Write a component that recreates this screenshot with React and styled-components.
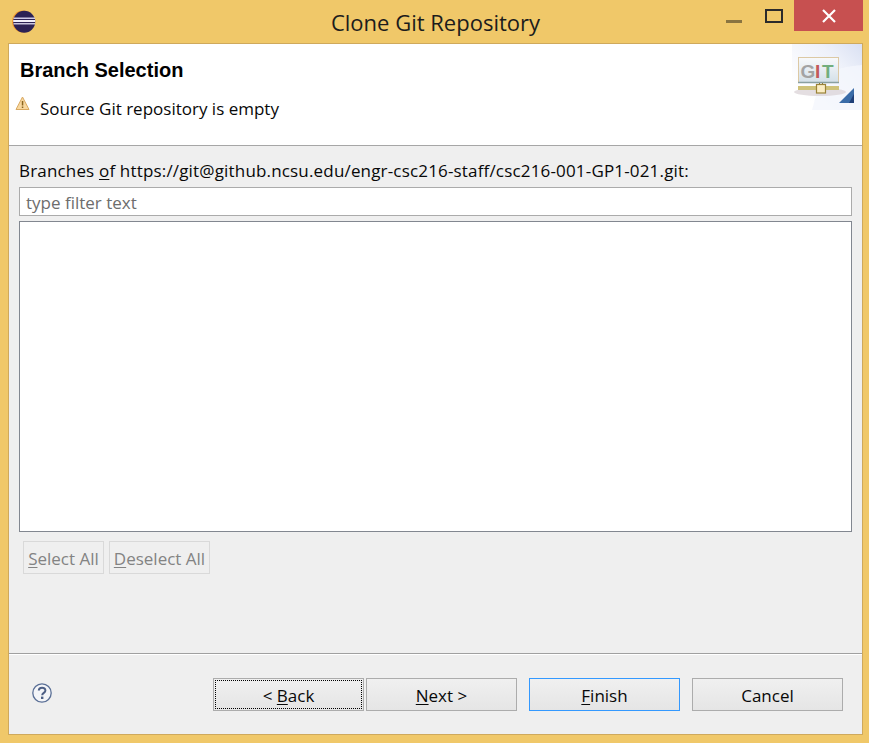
import React from 'react';
import styled, { createGlobalStyle, css } from 'styled-components';

const Global = createGlobalStyle`
    html, body {
        margin: 0;
        padding: 0;
        background: #f0c869;
    }
    * {
        box-sizing: border-box;
    }
`;

const Window = styled.div`
    width: 869px;
    height: 743px;
    background: #f0c869;
    display: flex;
    flex-direction: column;
    font-family: "Open Sans", "Noto Sans", sans-serif;
    font-size: 17px;
    color: #080808;
    overflow: hidden;
`;

const TitleBar = styled.div`
    height: 43px;
    flex: none;
    display: grid;
    grid-template-columns: 1fr auto 1fr;
    align-items: start;
`;

const AppIcon = styled.div`
    padding: 10px 0 0 12px;
    line-height: 0;
`;

const Title = styled.div`
    font-size: 22px;
    line-height: 44px;
    color: #1c1c1c;
    padding-left: 2px;
`;

const Controls = styled.div`
    display: flex;
    justify-content: flex-end;
    padding-right: 6px;
`;

const ControlButton = styled.div`
    height: 31px;
    display: flex;
    align-items: center;
    justify-content: center;
    line-height: 0;
    width: ${p => p.$width}px;
    background: ${p => p.$close ? '#c75050' : 'transparent'};
`;

const Body = styled.div`
    margin: 0 6px 8px 8px;
    flex: 1;
    border: 1px solid #cfa95c;
    background: #efefef;
    display: flex;
    flex-direction: column;
`;

const Header = styled.div`
    height: 102px;
    flex: none;
    background: #fff;
    border-bottom: 1px solid #a6a6a6;
    display: flex;
    justify-content: space-between;
    align-items: flex-start;
`;

const HeaderText = styled.div`
    padding: 13px 0 0 6px;
`;

const Heading = styled.div`
    font-family: "Liberation Sans", Arial, sans-serif;
    font-weight: 700;
    font-size: 20px;
    line-height: 26px;
    color: #000;
    padding-left: 5px;
`;

const Message = styled.div`
    display: flex;
    align-items: center;
    gap: 10px;
    margin-top: 13px;
    line-height: 26px;
`;

const WarningWrap = styled.span`
    line-height: 0;
    margin-top: -11px;
`;

const Main = styled.div`
    flex: 1;
    display: flex;
    flex-direction: column;
    padding: 14px 10px 0 10px;
`;

const Label = styled.div`
    height: 27px;
    line-height: 21px;
    white-space: nowrap;
    letter-spacing: 0.17px;
`;

const FilterInput = styled.div`
    height: 29px;
    border: 1px solid #ababab;
    background: #fff;
    padding-left: 6px;
    line-height: 29px;
    color: #6d6d6d;
`;

const BranchList = styled.div`
    height: 311px;
    margin-top: 5px;
    border: 1px solid #828790;
    background: #fff;
`;

const SelectRow = styled.div`
    display: flex;
    gap: 5px;
    padding: 9px 0 0 4px;
`;

const SmallButton = styled.div`
    height: 33px;
    width: ${p => p.$width}px;
    border: 1px solid #d9d9d9;
    background: #efefef;
    color: #838383;
    line-height: 33px;
    text-align: center;
    white-space: nowrap;
`;

const Footer = styled.div`
    height: 81px;
    flex: none;
    border-top: 1px solid #a0a0a0;
    box-shadow: inset 0 1px 0 #fff;
    display: flex;
    align-items: flex-start;
    padding: 24px 19px 0 23px;
`;

const HelpIcon = styled.div`
    line-height: 0;
    padding-top: 5px;
    margin-right: auto;
`;

const FooterButtons = styled.div`
    display: flex;
`;

const Button = styled.div`
    position: relative;
    width: 151px;
    height: 33px;
    margin-left: ${p => p.$gap}px;
    border: 1px solid ${p => p.$primary ? '#3399ff' : '#acacac'};
    background: linear-gradient(#f0f0f0, #e5e5e5);
    line-height: 33px;
    text-align: center;
    ${p => p.$focused && css`
        &::after {
            content: "";
            position: absolute;
            inset: 1px;
            border: 1px dotted #000;
        }
    `}
`;

const Key = styled.span`
    text-decoration: underline;
    text-underline-offset: 2px;
`;

function EclipseIcon() {
    return (
        <svg width="24" height="24" viewBox="0 0 24 24">
            <circle cx="11" cy="11.5" r="11" fill="#f29a2e" />
            <circle cx="12.2" cy="11.7" r="11" fill="#2c2255" />
            <rect x="1.5" y="7.5" width="21.5" height="1.5" fill="#cfcae6" />
            <rect x="1.2" y="10" width="22" height="2" fill="#f2f0fa" />
            <rect x="1.5" y="13" width="21.5" height="1.5" fill="#c8c4de" />
        </svg>
    );
}

function CloseIcon() {
    return (
        <svg width="14" height="14" viewBox="0 0 14 14">
            <path d="M1 1 L13 13 M13 1 L1 13" stroke="#fff" strokeWidth="2.2" fill="none" />
        </svg>
    );
}

function WarningIcon() {
    return (
        <svg width="15" height="15" viewBox="0 0 15 15">
            <path d="M7.5 1 L14 13.5 H1 Z" fill="#f8d8a0" stroke="#d9a860" strokeWidth="1" strokeLinejoin="round" />
            <rect x="6.8" y="5" width="1.5" height="4.5" fill="#8a6420" />
            <rect x="6.8" y="10.5" width="1.5" height="1.5" fill="#8a6420" />
        </svg>
    );
}

function HelpGlyph() {
    return (
        <svg width="20" height="20" viewBox="0 0 20 20">
            <circle cx="10" cy="10" r="9.2" fill="#f4f5f8" stroke="#5a6f96" strokeWidth="1.3" />
            <path d="M6.8 7.6 C6.8 3.8 13.4 3.8 13.4 7.5 C13.4 10 10.2 9.8 10.2 12.3" fill="none" stroke="#4d5f85" strokeWidth="2" />
            <rect x="9" y="13.6" width="2.4" height="2.4" fill="#4d5f85" />
        </svg>
    );
}

function GitBanner() {
    return (
        <svg width="70" height="66" viewBox="0 0 70 66" style={{ display: 'block' }}>
            <defs>
                <linearGradient id="sweep" x1="0" y1="1" x2="1" y2="0">
                    <stop offset="0.2" stopColor="#ffffff" />
                    <stop offset="0.7" stopColor="#eef1fa" />
                    <stop offset="1" stopColor="#d9e0f2" />
                </linearGradient>
                <linearGradient id="screen" x1="0" y1="0" x2="0" y2="1">
                    <stop offset="0" stopColor="#f8f9fb" />
                    <stop offset="1" stopColor="#d4e0e8" />
                </linearGradient>
            </defs>
            <rect width="70" height="66" fill="url(#sweep)" />
            <path d="M30 30 C45 24 58 22 70 21 V66 H20 Z" fill="#f4f6fc" opacity="0.8" />
            <rect x="6.5" y="13.5" width="40" height="25" fill="url(#screen)" stroke="#dcc9a4" />
            <path d="M6 38.5 H47" stroke="#8aa0a0" strokeWidth="1.5" />
            <text x="8.5" y="34" fontFamily="Liberation Sans, sans-serif" fontWeight="700" fontSize="19" fill="#a3a3a3">G</text>
            <text x="23" y="34" fontFamily="Liberation Sans, sans-serif" fontWeight="700" fontSize="19" fill="#c25a5a">I</text>
            <text x="30" y="34" fontFamily="Liberation Sans, sans-serif" fontWeight="700" fontSize="19" fill="#72ae7c">T</text>
            <ellipse cx="28" cy="48" rx="26" ry="4" fill="#d8d0d4" opacity="0.7" />
            <rect x="6" y="42" width="41" height="4" fill="#cfc279" />
            <rect x="27" y="39" width="1" height="3" fill="#8b7a35" />
            <rect x="30" y="39" width="1" height="3" fill="#8b7a35" />
            <rect x="24.5" y="40.5" width="9" height="8.5" fill="#fbedc4" stroke="#9a8338" strokeWidth="1.2" />
            <path d="M47 59 L62 44 V59 Z" fill="#3a6ca8" />
            <path d="M57 59 L62 50 V59 Z" fill="#1f3f78" />
        </svg>
    );
}

function App() {
    return (
        <>
            <Global />
            <Window>
                <TitleBar>
                    <AppIcon><EclipseIcon /></AppIcon>
                    <Title>Clone Git Repository</Title>
                    <Controls>
                        <ControlButton $width={40}>
                            <svg width="16" height="14" viewBox="0 0 16 14">
                                <rect x="0" y="11" width="16" height="3" fill="#8a7440" />
                            </svg>
                        </ControlButton>
                        <ControlButton $width={40}>
                            <svg width="18" height="14" viewBox="0 0 18 14">
                                <rect x="1" y="1" width="16" height="12" fill="none" stroke="#2b2b2b" strokeWidth="2" />
                            </svg>
                        </ControlButton>
                        <ControlButton $width={69} $close><CloseIcon /></ControlButton>
                    </Controls>
                </TitleBar>
                <Body>
                    <Header>
                        <HeaderText>
                            <Heading>Branch Selection</Heading>
                            <Message>
                                <WarningWrap><WarningIcon /></WarningWrap>
                                Source Git repository is empty
                            </Message>
                        </HeaderText>
                        <GitBanner />
                    </Header>
                    <Main>
                        <Label>Branches <Key>o</Key>f https://git@github.ncsu.edu/engr-csc216-staff/csc216-001-GP1-021.git:</Label>
                        <FilterInput>type filter text</FilterInput>
                        <BranchList />
                        <SelectRow>
                            <SmallButton $width={81}><Key>S</Key>elect All</SmallButton>
                            <SmallButton $width={101}><Key>D</Key>eselect All</SmallButton>
                        </SelectRow>
                    </Main>
                    <Footer>
                        <HelpIcon><HelpGlyph /></HelpIcon>
                        <FooterButtons>
                            <Button $focused>&lt; <Key>B</Key>ack</Button>
                            <Button $gap={2}><Key>N</Key>ext &gt;</Button>
                            <Button $gap={12} $primary><Key>F</Key>inish</Button>
                            <Button $gap={12}>Cancel</Button>
                        </FooterButtons>
                    </Footer>
                </Body>
            </Window>
        </>
    );
}

export default App;
